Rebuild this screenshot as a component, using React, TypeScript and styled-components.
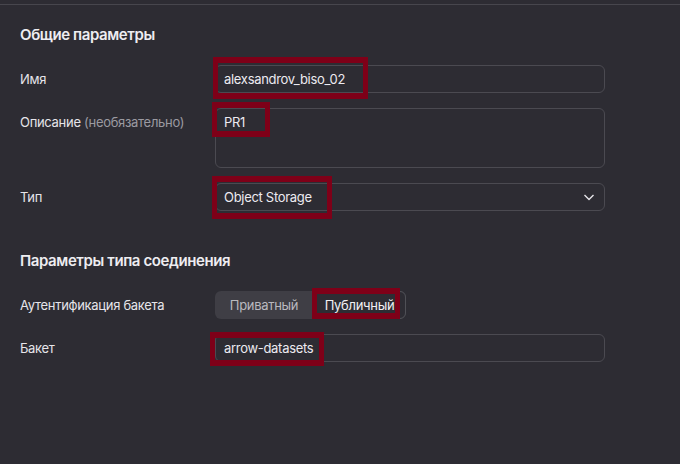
import { createGlobalStyle } from "styled-components";
import styled from "styled-components";

const GlobalStyle = createGlobalStyle`
  html, body {
    margin: 0;
    padding: 0;
    background: #2d2c33;
  }
  body {
    font-family: Inter, "Noto Sans", "Liberation Sans", sans-serif;
    color: #e9e8ec;
    letter-spacing: -0.3px;
    -webkit-font-smoothing: antialiased;
  }
`;

const Page = styled.div`
  position: relative;
  width: 680px;
  height: 464px;
  overflow: hidden;
  background: #2d2c33;
`;

const TopRule = styled.div`
  height: 4px;
  border-bottom: 1px solid #47464d;
`;

const Form = styled.div`
  display: flex;
  flex-direction: column;
  gap: 40px;
  padding: 20px 75px 0 20px;
`;

const Section = styled.section`
  display: flex;
  flex-direction: column;
  gap: 20px;
`;

const SectionTitle = styled.h2`
  margin: 0;
  font-size: 15px;
  line-height: 20px;
  font-weight: 600;
  letter-spacing: -0.4px;
  color: #eeedf1;
`;

const Rows = styled.div`
  display: flex;
  flex-direction: column;
  gap: 15px;
`;

const Row = styled.div`
  display: grid;
  grid-template-columns: 195px 390px;
  align-items: start;
`;

const Label = styled.div`
  font-size: 13px;
  line-height: 28px;
  color: #e6e5ea;
`;

const Hint = styled.span`
  color: #9b9aa1;
`;

const TextInput = styled.input`
  box-sizing: border-box;
  width: 100%;
  height: 28px;
  margin: 0;
  padding: 0 8px;
  border: 1px solid #4b4a51;
  border-radius: 6px;
  background: transparent;
  font: inherit;
  font-size: 13px;
  letter-spacing: inherit;
  color: #eceaf0;
  outline: none;
`;

const TextArea = styled.textarea`
  box-sizing: border-box;
  width: 100%;
  height: 60px;
  margin: 0;
  padding: 4px 8px;
  border: 1px solid #4b4a51;
  border-radius: 6px;
  background: transparent;
  font: inherit;
  font-size: 13px;
  line-height: 18px;
  letter-spacing: inherit;
  color: #eceaf0;
  resize: none;
  outline: none;
`;

const SelectBox = styled.div`
  box-sizing: border-box;
  height: 28px;
  display: flex;
  align-items: center;
  justify-content: space-between;
  padding: 0 9px 0 8px;
  border: 1px solid #4b4a51;
  border-radius: 6px;
  font-size: 13px;
  color: #eceaf0;
`;

const Segmented = styled.div`
  box-sizing: border-box;
  height: 28px;
  width: 191px;
  display: flex;
  border-radius: 6px;
  background: #3f3e45;
`;

const SegmentOption = styled.div<{ $active?: boolean }>`
  box-sizing: border-box;
  flex: ${(p) => (p.$active ? "0 0 93px" : "1")};
  display: flex;
  align-items: center;
  justify-content: center;
  font-size: 13px;
  border-radius: 6px;
  color: ${(p) => (p.$active ? "#f1f0f4" : "#bab9bf")};
  background: ${(p) => (p.$active ? "#2d2c33" : "transparent")};
  border: ${(p) => (p.$active ? "1px solid #505056" : "none")};
`;

const Mark = styled.div<{ $x: number; $y: number; $w: number; $h: number }>`
  position: absolute;
  box-sizing: border-box;
  left: ${(p) => p.$x}px;
  top: ${(p) => p.$y}px;
  width: ${(p) => p.$w}px;
  height: ${(p) => p.$h}px;
  border: 5px solid #7e0018;
  border-top-width: 6px;
  border-bottom-width: 6px;
  pointer-events: none;
`;

function Chevron() {
  return (
    <svg width="12" height="12" viewBox="0 0 12 12" fill="none">
      <path d="M1.5 4L6 8.5L10.5 4" stroke="#e6e5ea" strokeWidth="1.4" strokeLinejoin="round" />
    </svg>
  );
}

export default function App() {
  return (
    <Page>
      <GlobalStyle />
      <TopRule />
      <Form>
        <Section>
          <SectionTitle>Общие параметры</SectionTitle>
          <Rows>
            <Row>
              <Label>Имя</Label>
              <TextInput readOnly defaultValue="alexsandrov_biso_02" />
            </Row>
            <Row>
              <Label>
                Описание <Hint>(необязательно)</Hint>
              </Label>
              <TextArea readOnly defaultValue="PR1" />
            </Row>
            <Row>
              <Label>Тип</Label>
              <SelectBox>
                <span>Object Storage</span>
                <Chevron />
              </SelectBox>
            </Row>
          </Rows>
        </Section>
        <Section>
          <SectionTitle>Параметры типа соединения</SectionTitle>
          <Rows>
            <Row>
              <Label>Аутентификация бакета</Label>
              <Segmented>
                <SegmentOption>Приватный</SegmentOption>
                <SegmentOption $active>Публичный</SegmentOption>
              </Segmented>
            </Row>
            <Row>
              <Label>Бакет</Label>
              <TextInput readOnly defaultValue="arrow-datasets" />
            </Row>
          </Rows>
        </Section>
      </Form>

      <Mark $x={213} $y={57} $w={155} $h={42} />
      <Mark $x={212} $y={102} $w={58} $h={35} />
      <Mark $x={212} $y={176} $w={120} $h={43} />
      <Mark $x={312} $y={288} $w={88} $h={31} />
      <Mark $x={210} $y={332} $w={114} $h={34} />
    </Page>
  );
}
